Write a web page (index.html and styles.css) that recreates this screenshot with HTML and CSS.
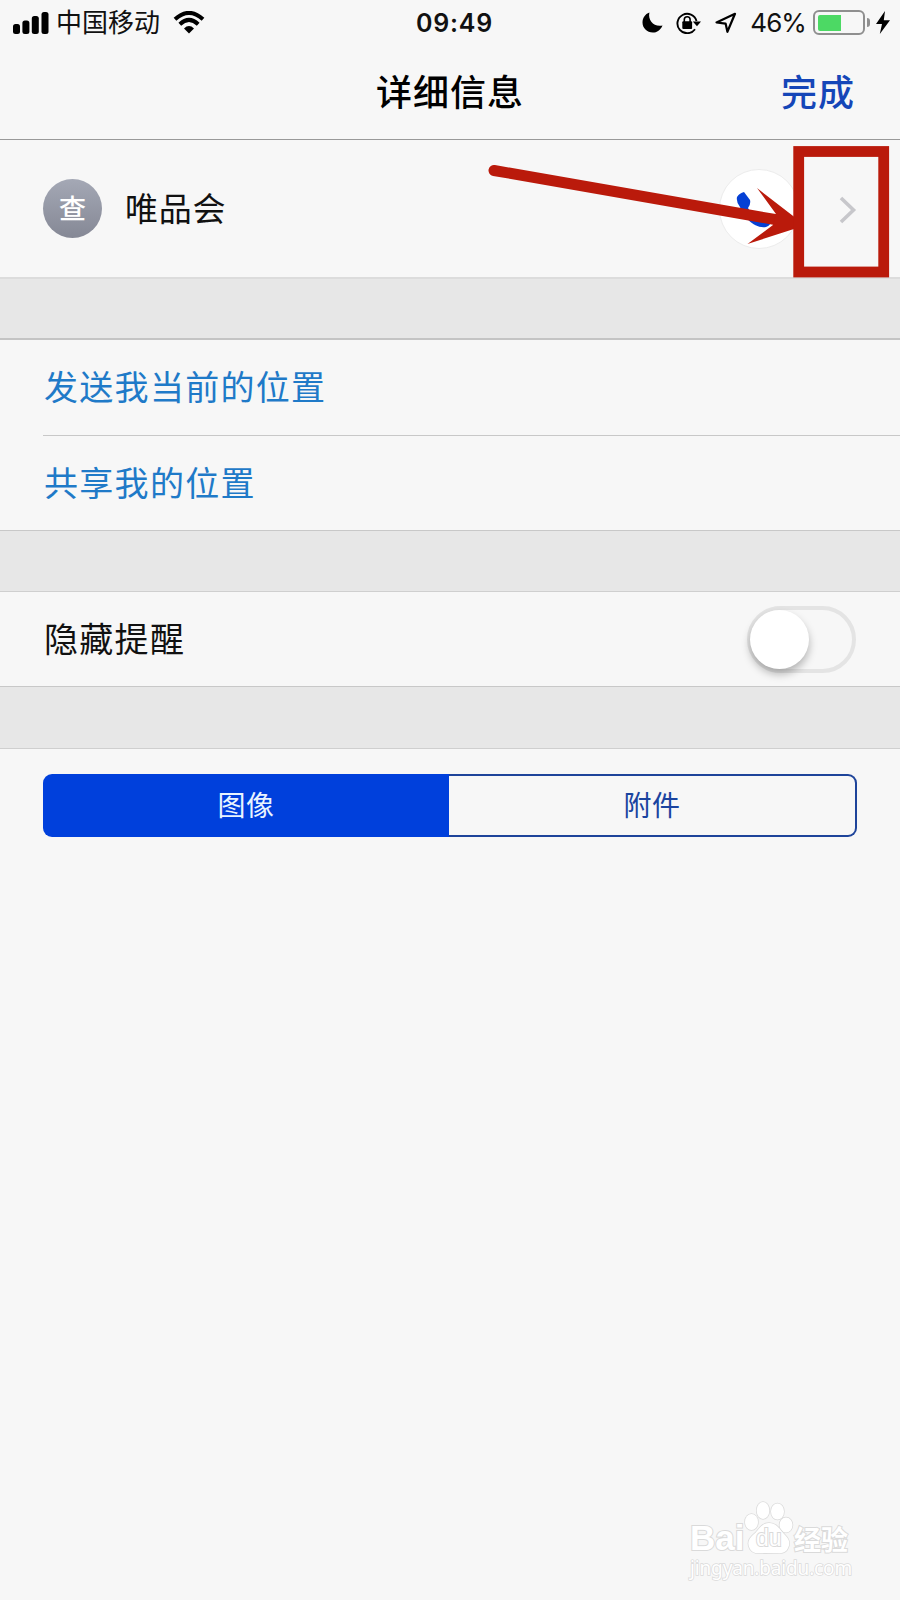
FILE: index.html
```
<!DOCTYPE html>
<html lang="zh-CN">
<head>
    <meta charset="UTF-8">
    <meta name="viewport" content="width=device-width, initial-scale=1">
    <title>详细信息</title>
    <link rel="stylesheet" href="styles.css">
</head>
<body>
    <div class="screen">
        <div class="status-bar">
            <div class="status-left">
                <svg class="signal" width="36" height="22" viewBox="0 0 36 22">
                    <rect x="0" y="12" width="7" height="10" rx="2.5"/>
                    <rect x="9.4" y="8.5" width="7" height="13.5" rx="2.5"/>
                    <rect x="18.8" y="4" width="7" height="18" rx="2.5"/>
                    <rect x="28.5" y="0" width="7" height="22" rx="2.5"/>
                </svg>
                <span class="carrier">中国移动</span>
                <svg class="wifi" width="32" height="23" viewBox="0 0 32 23">
                    <path d="M2 8.2Q16-4.4 30 8.2M6.8 13.2Q16 4.6 25.2 13.2" fill="none" stroke="#000" stroke-width="4"/>
                    <path d="M11 17.4Q16 12.6 21 17.4L16 22.4Z"/>
                </svg>
            </div>
            <div class="time">09:49</div>
            <div class="status-right">
                <svg class="moon" width="21" height="21" viewBox="0 0 21 21">
                    <path d="M7.4.5C5.6 8.600 12 15.200 20.500 13.400C18.500 18 15 20.500 10.800 20.500C5 20.500.5 16 .5 10.500C.5 6 3 2 7.400.5Z"/>
                </svg>
                <svg class="lock" width="26" height="22" viewBox="0 0 26 22">
                    <path d="M19 17.2A9.7 9.7 0 1 1 20.5 9" fill="none" stroke="#000" stroke-width="1.9"/>
                    <path d="M16.8 9.4H25L21 14.2Z"/>
                    <rect x="6.3" y="9.2" width="9.8" height="7.8" rx="1"/>
                    <path d="M8.3 10V7.6a2.9 2.9 0 0 1 5.8 0V10" fill="none" stroke="#000" stroke-width="1.6"/>
                </svg>
                <svg class="location" width="22" height="22" viewBox="0 0 22 22">
                    <path d="M1.5 10.5L20 1.8L12.4 19.8L10.6 11.6Z" fill="none" stroke="#000" stroke-width="2.2" stroke-linejoin="round"/>
                </svg>
                <span class="percent">46%</span>
                <span class="battery"><span class="battery-level"></span></span>
                <span class="battery-cap"></span>
                <svg class="bolt" width="14" height="23" viewBox="0 0 14 23">
                    <path d="M9 0L0 13H6L3.8 23L14 9.3H7.8Z"/>
                </svg>
            </div>
        </div>
        <div class="nav-bar">
            <h1>详细信息</h1>
            <a class="done">完成</a>
        </div>

        <div class="contact">
            <div class="avatar">查</div>
            <div class="name">唯品会</div>
            <div class="call">
                <svg width="42" height="42" viewBox="0 0 42 42">
                    <path d="M2 9C4 6 6 5 9 4L15 12Q16 16 13 20Q17 28 24 31Q28 27 31 29L36 33Q36 37 31 39C19 41 8 28 5 19Q1 14 2 9Z"/>
                </svg>
            </div>
            <svg class="chevron" width="18" height="30" viewBox="0 0 18 30">
                <path d="M2 3L14.500 15L2 27" fill="none" stroke="#c7c7cb" stroke-width="3.600"/>
            </svg>
            <!-- flecha y recuadro -->
            <svg class="pointer" width="900" height="140" viewBox="0 0 900 140">
                <path d="M494 30.500L778 80" stroke="#ba1a0b" stroke-width="11" stroke-linecap="round"/>
                <path d="M757 48L797 79V88L747.500 104L773 85L776 74Z" fill="#ba1a0b"/>
                <rect x="798.700" y="11.500" width="85" height="120.500" fill="none" stroke="#ba1a0b" stroke-width="10.800"/>
            </svg>
        </div>
        <div class="gap gap-first"></div>
        <div class="row link">发送我当前的位置</div>
        <div class="row link divided">共享我的位置</div>
        <div class="gap gap-second"></div>
        <div class="row">
            <span class="label">隐藏提醒</span>
            <span class="switch"><span class="knob"></span></span>
        </div>
        <div class="gap"></div>
        <div class="segmented">
            <div class="segment active">图像</div>
            <div class="segment">附件</div>
        </div>

        <div class="watermark">
            <div class="brand">
                <span class="bai">Bai</span>
                <span class="paw">
                    <svg width="50" height="54" viewBox="0 0 50 54">
                        <ellipse cx="7.500" cy="21" rx="6.500" ry="8"/>
                        <ellipse cx="19" cy="9.500" rx="6.300" ry="8.500"/>
                        <ellipse cx="33.500" cy="10.500" rx="6.500" ry="8"/>
                        <ellipse cx="42" cy="24" rx="6.500" ry="7.500"/>
                        <path d="M25 22C33 22 36 29 41 34C46 39 46 43 44 47C41 54 34 52 25 52C16 52 10 54 6 48C3 43 4 38 10 33C15 29 17 22 25 22Z"/>
                    </svg>
                    <span class="du">du</span>
                </span>
                <span class="exp">经验</span>
            </div>
            <div class="site">jingyan.baidu.com</div>
        </div>
    </div>
</body>
</html>
```

FILE: styles.css
```
* {
    box-sizing: border-box;
}
html, body {
    margin: 0;
    padding: 0;
    height: 100%;
}
body {
    background: #f7f7f7;
    font-family: Inter, "Noto Sans CJK SC", sans-serif;
    color: #111;
}
.screen {
    height: 1600px;
    display: flex;
    flex-direction: column;
    overflow: hidden;
}
.status-bar {
    height: 45px;
    flex-shrink: 0;
    display: grid;
    grid-template-columns: 1fr auto 1fr;
    align-items: center;
    padding: 0 10px 0 13px;
}
.status-left, .status-right {
    display: flex;
    align-items: center;
}
.status-right {
    justify-content: flex-end;
}
.carrier {
    margin-left: 7px;
    font-size: 26px;
    line-height: 45px;
}
.wifi {
    margin-left: 13px;
    margin-bottom: 1px;
}
.time {
    font-size: 25px;
    font-weight: 600;
    letter-spacing: 0.8px;
    padding-left: 6px;
}
.lock {
    margin-left: 13px;
}
.location {
    margin-left: 13px;
}
.percent {
    margin-left: 13px;
    font-size: 26px;
    letter-spacing: -0.9px;
}
.battery {
    width: 52px;
    height: 25px;
    margin-left: 7px;
    padding: 2.5px;
    border: 2px solid #8f8f8f;
    border-radius: 6px;
}
.battery-level {
    display: block;
    width: 23px;
    height: 16px;
    background: #4cd964;
    border-radius: 2px 0 0 2px;
}
.battery-cap {
    width: 3px;
    height: 9px;
    margin-left: 2px;
    background: #8f8f8f;
    border-radius: 0 3px 3px 0;
}
.bolt {
    margin-left: 6px;
}
.nav-bar {
    height: 95px;
    flex-shrink: 0;
    display: flex;
    align-items: center;
    position: relative;
    padding-bottom: 5px;
    border-bottom: 1px solid #999;
}
.nav-bar h1 {
    flex: 1;
    margin: 0;
    text-align: center;
    font-size: 36px;
    font-weight: 500;
    letter-spacing: 1px;
    color: #000;
}
.done {
    position: absolute;
    right: 45px;
    font-size: 36px;
    font-weight: 500;
    letter-spacing: 1px;
    color: #1546b8;
}
.contact {
    height: 137px;
    flex-shrink: 0;
    position: relative;
    display: flex;
    align-items: center;
    padding: 0 43px 0 43px;
}
.avatar {
    width: 59px;
    height: 59px;
    border-radius: 50%;
    background: linear-gradient(#a4a8b5, #858895);
    color: #fff;
    font-size: 27px;
    font-weight: 500;
    line-height: 61px;
    text-align: center;
}
.name {
    flex: 1;
    margin-left: 23px;
    padding-bottom: 4px;
    font-size: 33px;
    letter-spacing: 0.8px;
}
.call {
    width: 80px;
    height: 80px;
    margin-right: 40px;
    padding-right: 6px;
    display: flex;
    align-items: center;
    justify-content: center;
    background: #fff;
    border: 1px solid #ececec;
    border-radius: 50%;
    fill: #0540d5;
}
.chevron {
    margin-top: 2px;
}
.pointer {
    position: absolute;
    top: 0;
    left: 0;
}
.gap {
    height: 63px;
    flex-shrink: 0;
    background: #e7e7e7;
    border-top: 1px solid #c8c8c8;
    border-bottom: 1px solid #cfcfcf;
}
.gap-first {
    border-top: 2px solid #dcdcdc;
    border-bottom: 2px solid #c4c4c4;
}
.gap-second {
    height: 62px;
}
.row {
    height: 94px;
    flex-shrink: 0;
    margin-left: 43px;
    padding: 0 44px 0 1px;
    display: flex;
    align-items: center;
    justify-content: space-between;
    font-size: 34px;
    letter-spacing: 1.3px;
}
.label {
    padding-bottom: 3px;
}
.link {
    height: 95px;
    padding-bottom: 5px;
    color: #1f7ac8;
}
.divided {
    padding-bottom: 4px;
    border-top: 1px solid #c8c8c8;
}
.switch {
    width: 109px;
    height: 67px;
    margin-top: 1px;
    border: 4px solid #e4e4e4;
    border-radius: 34px;
}
.knob {
    display: block;
    width: 59px;
    height: 59px;
    margin-left: -1px;
    background: #fff;
    border-radius: 50%;
    box-shadow: 0 5px 9px rgba(0,0,0,0.28);
}
.segmented {
    height: 63px;
    flex-shrink: 0;
    margin: 25px 43px 0;
    display: flex;
}
.segment {
    flex: 1;
    display: flex;
    align-items: center;
    justify-content: center;
    padding-bottom: 3px;
    font-size: 28px;
    letter-spacing: 0.5px;
    color: #1b449f;
    border: 2px solid #1e449a;
    border-left: none;
    border-radius: 0 9px 9px 0;
}
.segment.active {
    background: #0040dc;
    color: #e9f4ff;
    border: none;
    border-radius: 9px 0 0 9px;
}
.watermark {
    margin: auto 48px 19px auto;
    width: 162px;
    color: #fff;
    -webkit-text-stroke: 2px #dadada;
    paint-order: stroke fill;
}
.brand {
    height: 54px;
    display: flex;
    align-items: flex-end;
}
.bai {
    width: 54px;
    font-size: 35px;
    line-height: 34px;
    font-family: "Liberation Sans", sans-serif;
    font-weight: bold;
}
.paw {
    position: relative;
    height: 54px;
    width: 50px;
    fill: #fff;
    stroke: #dadada;
    stroke-width: 1.5px;
}
.du {
    position: absolute;
    left: 12px;
    top: 24px;
    font: 23px "Liberation Sans", sans-serif;
}
.exp {
    font-size: 27px;
    line-height: 28px;
    font-weight: 700;
}
.site {
    font: 19px/26px "Noto Sans", sans-serif;
    letter-spacing: -0.15px;
    -webkit-text-stroke-width: 1.5px;
}
```
